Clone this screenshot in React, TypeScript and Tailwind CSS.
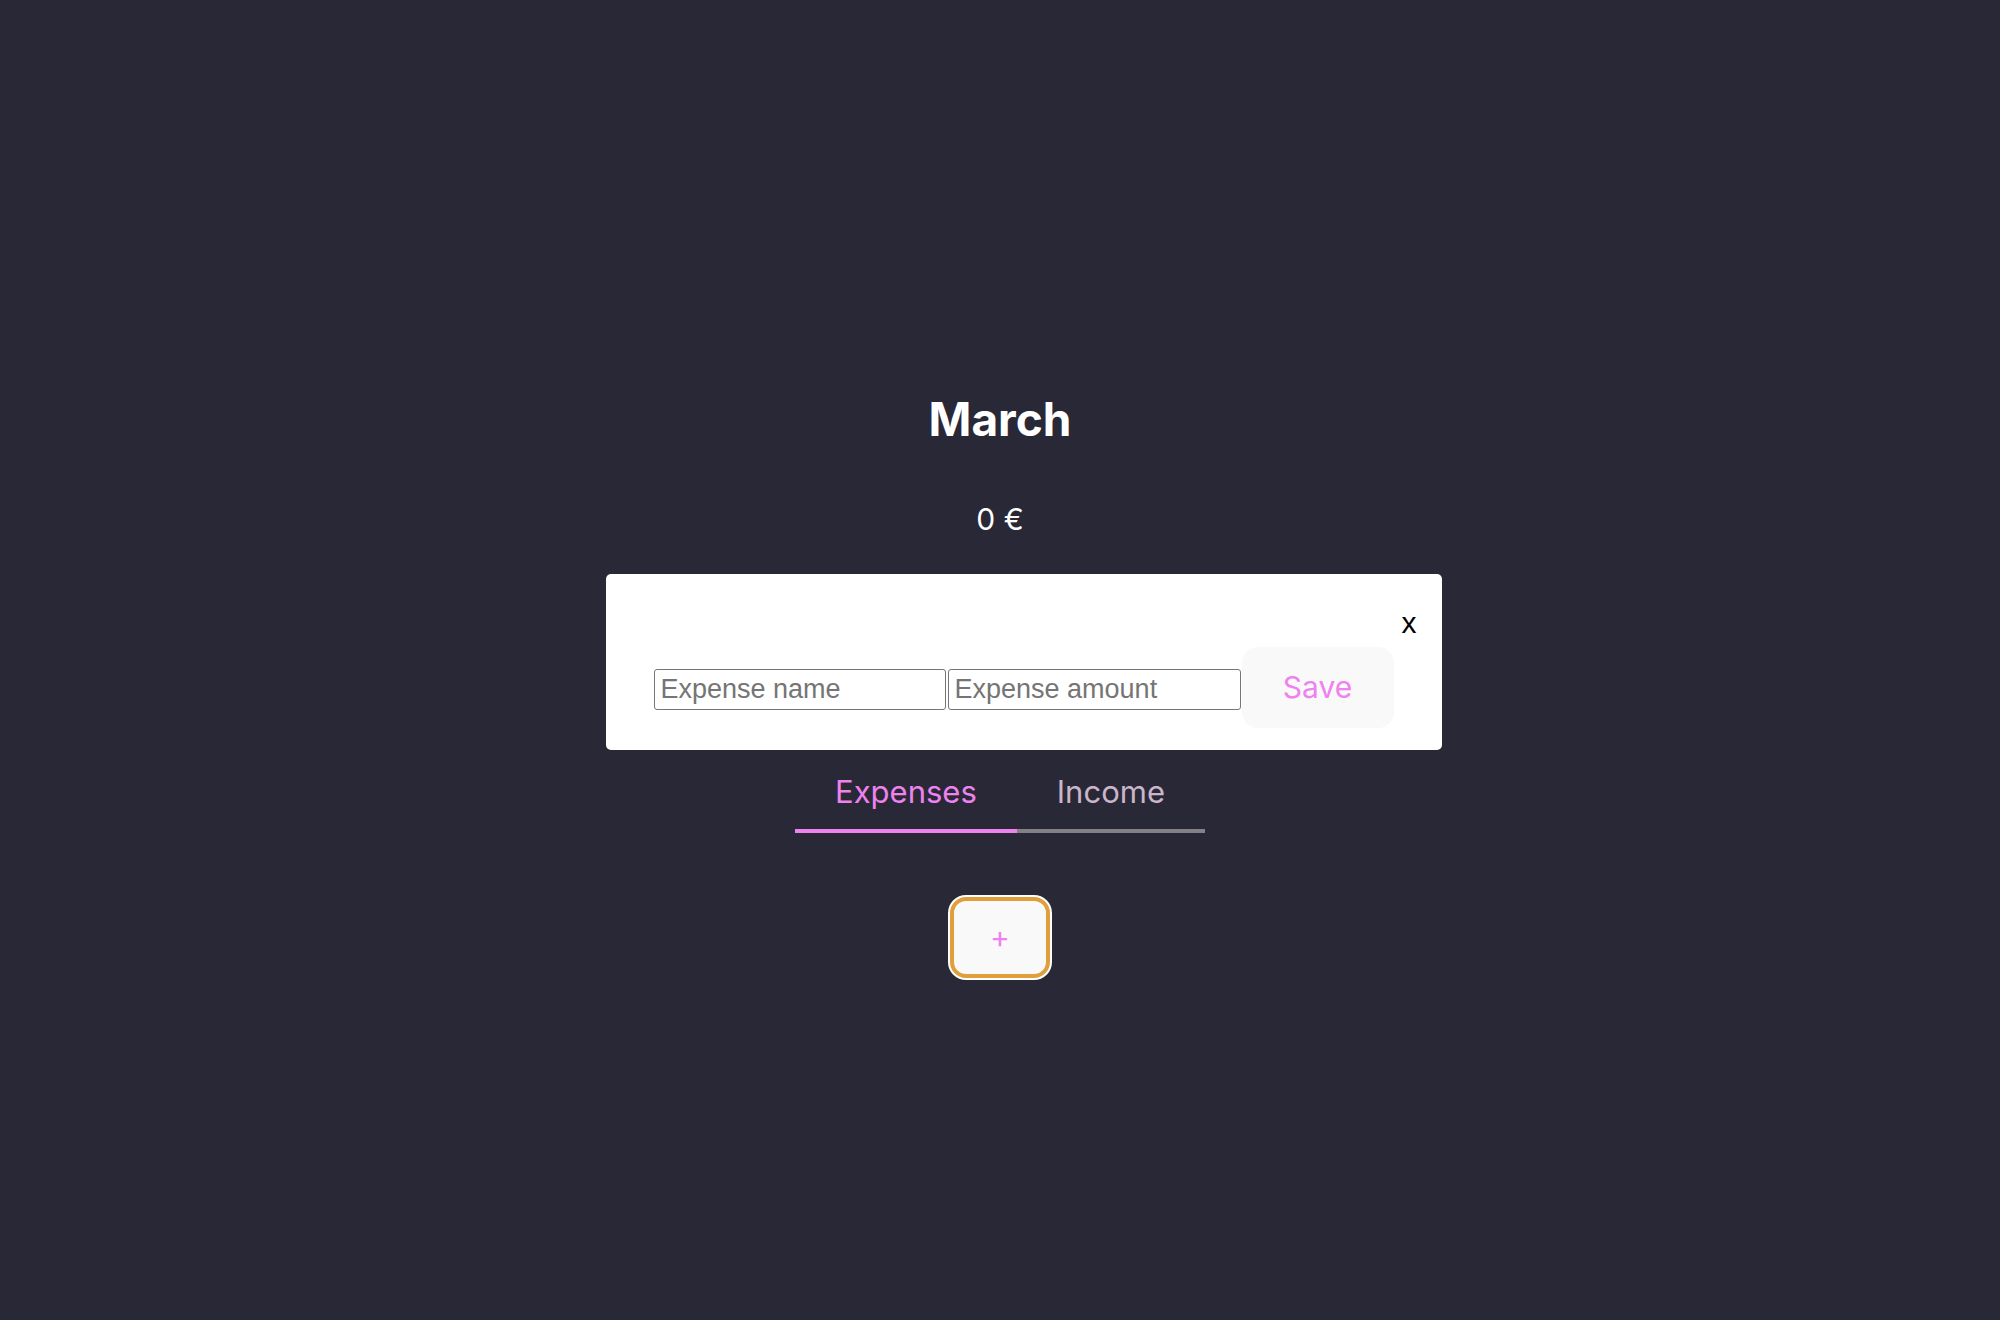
import React, { useState } from "react";

const TABS = ["Expenses", "Income"] as const;

export default function App() {
  const [tab, setTab] = useState<(typeof TABS)[number]>("Expenses");
  const [name, setName] = useState("");
  const [amount, setAmount] = useState("");

  return (
    <div
      className="min-h-screen bg-[#292837] flex flex-col items-center pt-[391px]"
      style={{ fontFamily: "Inter, 'Liberation Sans', sans-serif" }}
    >
      <h1 className="text-white text-[46px] leading-[56px] font-bold">March</h1>
      <p className="mt-[54px] text-white text-[30px] leading-[36px]">0 €</p>

      {/* Add expense card */}
      <div className="mt-[37px] ml-[47px] w-[836px] bg-white rounded-[5px] pl-[48px] pr-[25px] pt-[26px] pb-[22px]">
        <div className="flex justify-end">
          <button
            type="button"
            className="text-black text-[30px] leading-[45px] font-['Liberation_Sans',Arial,sans-serif]"
          >
            x
          </button>
        </div>
        <div className="mt-[2px] mr-[23px] flex items-center">
          <input
            value={name}
            onChange={(e) => setName(e.target.value)}
            placeholder="Expense name"
            className="w-[292px] h-[41px] mt-[3px] border border-[#767676] rounded-[3px] px-[6px] text-[27px] text-black placeholder:text-[#757575] font-['Liberation_Sans',Arial,sans-serif] outline-none"
          />
          <input
            value={amount}
            onChange={(e) => setAmount(e.target.value)}
            placeholder="Expense amount"
            className="ml-[2px] w-[293px] h-[41px] mt-[3px] border border-[#767676] rounded-[3px] px-[6px] text-[27px] text-black placeholder:text-[#757575] font-['Liberation_Sans',Arial,sans-serif] outline-none"
          />
          <button
            type="button"
            className="ml-[1px] w-[152px] h-[81px] rounded-2xl bg-[#f9f9f9] text-[#ee82ee] text-[30px] leading-[45px]"
          >
            Save
          </button>
        </div>
      </div>

      {/* Tabs */}
      <div className="flex">
        {TABS.map((t) => (
          <button
            key={t}
            type="button"
            onClick={() => setTab(t)}
            className={`px-[40px] pt-[19px] pb-[15px] text-[31px] leading-[45px] border-b-4 ${
              tab === t ? "text-[#ee82ee] border-[#ee82ee]" : "text-[#c9b6ca] border-[#858087]"
            }`}
          >
            {t}
          </button>
        ))}
      </div>

      <button
        type="button"
        className="mt-[64px] px-[36px] py-[14px] rounded-2xl bg-[#f9f9f9] border-4 border-[#e09f3b] ring-2 ring-white text-[#ee82ee] text-[30px] leading-[45px]"
      >
        +
      </button>
    </div>
  );
}
